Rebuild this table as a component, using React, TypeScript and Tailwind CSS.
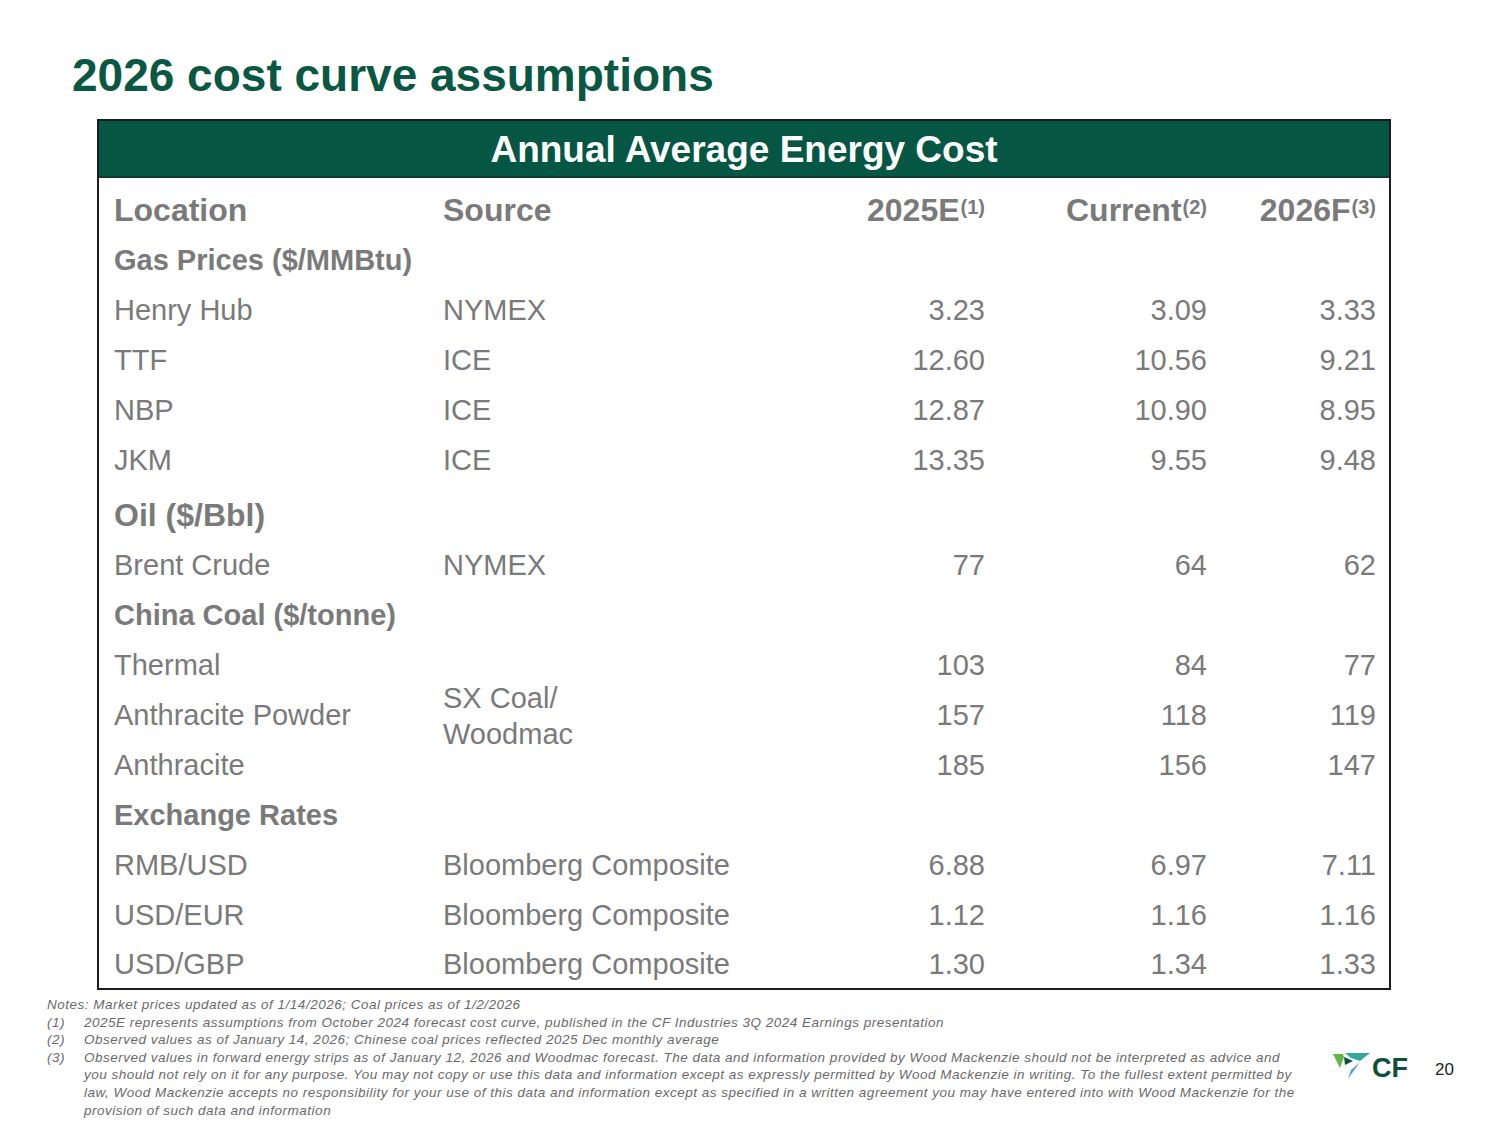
import React from 'react';

type Row =
  | { kind: 'section'; label: string; big?: boolean }
  | { kind: 'data'; label: string; source?: string; values: string[]; last?: boolean };

const rows: Row[] = [
  { kind: 'section', label: 'Gas Prices ($/MMBtu)' },
  { kind: 'data', label: 'Henry Hub', source: 'NYMEX', values: ['3.23', '3.09', '3.33'] },
  { kind: 'data', label: 'TTF', source: 'ICE', values: ['12.60', '10.56', '9.21'] },
  { kind: 'data', label: 'NBP', source: 'ICE', values: ['12.87', '10.90', '8.95'] },
  { kind: 'data', label: 'JKM', source: 'ICE', values: ['13.35', '9.55', '9.48'] },
  { kind: 'section', label: 'Oil ($/Bbl)', big: true },
  { kind: 'data', label: 'Brent Crude', source: 'NYMEX', values: ['77', '64', '62'] },
  { kind: 'section', label: 'China Coal ($/tonne)' },
  { kind: 'data', label: 'Thermal', source: 'coal', values: ['103', '84', '77'] },
  { kind: 'data', label: 'Anthracite Powder', values: ['157', '118', '119'] },
  { kind: 'data', label: 'Anthracite', values: ['185', '156', '147'] },
  { kind: 'section', label: 'Exchange Rates' },
  { kind: 'data', label: 'RMB/USD', source: 'Bloomberg Composite', values: ['6.88', '6.97', '7.11'] },
  { kind: 'data', label: 'USD/EUR', source: 'Bloomberg Composite', values: ['1.12', '1.16', '1.16'] },
  { kind: 'data', label: 'USD/GBP', source: 'Bloomberg Composite', values: ['1.30', '1.34', '1.33'], last: true },
];

const HeadNum = ({ text, note }: { text: string; note: string }) => (
  <div className="flex items-center justify-end">
    <span className="text-[32px] font-bold">{text}</span>
    <span className="text-[20px] font-bold self-start mt-[9px] ml-[1px]">({note})</span>
  </div>
);

// CF Industries mark: inverted triangle split in four pieces
const CfLogo = () => (
  <svg width="37" height="28" viewBox="0 0 37 28">
    <polygon points="0,2 10,2 11,5 7,16" fill="#62b847" />
    <polygon points="12,1 37,1 27,9 18,6" fill="#34a99b" />
    <polygon points="11,5 20,9 12,13" fill="#0d4f3a" />
    <polygon points="15,27 18,18 27,10" fill="#5b9bd5" />
  </svg>
);

export default function App() {
  return (
    <div
      className="w-[1500px] h-[1125px] bg-white overflow-hidden"
      style={{ fontFamily: '"Liberation Sans", Arial, sans-serif' }}
    >
      <h1 className="pl-[72px] pt-[52px] text-[46px] leading-none font-bold text-[#0a5843]">
        2026 cost curve assumptions
      </h1>

      <div className="ml-[97px] mt-[21px] w-[1294px] border-2 border-[#1c1c1c]">
        <div className="h-[57px] bg-[#055643] border-b-2 border-[#0d3b2d] flex items-center justify-center">
          <span className="mt-[3px] text-[37px] font-bold text-white">Annual Average Energy Cost</span>
        </div>

        <div className="grid grid-cols-[344px_342px_200px_222px_169px] pr-[13px] pt-[5px] text-[#7a7a7a]">
          <div className="h-[53px] pl-[15px] flex items-center text-[32px] font-bold">Location</div>
          <div className="h-[53px] flex items-center text-[32px] font-bold">Source</div>
          <HeadNum text="2025E" note="1" />
          <HeadNum text="Current" note="2" />
          <HeadNum text="2026F" note="3" />

          {rows.map((r, i) => {
            if (r.kind === 'section') {
              return (
                <div
                  key={i}
                  className={
                    r.big
                      ? 'col-span-5 h-[55px] pt-[3px] pl-[15px] flex items-center text-[32px] font-bold'
                      : 'col-span-5 h-[50px] pl-[15px] flex items-center text-[29px] font-bold'
                  }
                >
                  {r.label}
                </div>
              );
            }
            const h = r.last ? 'h-[47px]' : 'h-[50px]';
            return (
              <React.Fragment key={i}>
                <div className={`${h} pl-[15px] flex items-center text-[29px]`}>{r.label}</div>
                {r.source === 'coal' ? (
                  <div className="row-span-3 flex items-center text-[29px] leading-[36px]">
                    SX Coal/
                    <br />
                    Woodmac
                  </div>
                ) : r.source ? (
                  <div className={`${h} flex items-center text-[29px]`}>{r.source}</div>
                ) : null}
                {r.values.map((v, j) => (
                  <div key={j} className={`${h} flex items-center justify-end text-[29px]`}>
                    {v}
                  </div>
                ))}
              </React.Fragment>
            );
          })}
        </div>
      </div>

      <div className="flex items-start mt-[6px] pl-[47px]">
        <div className="w-[1262px] text-[13.5px] tracking-[0.5px] leading-[17.6px] italic text-[#6a6a6a] whitespace-nowrap">
          <div>Notes: Market prices updated as of 1/14/2026; Coal prices as of 1/2/2026</div>
          <div className="flex">
            <span className="w-[37px] shrink-0">(1)</span>
            <span>2025E represents assumptions from October 2024 forecast cost curve, published in the CF Industries 3Q 2024 Earnings presentation</span>
          </div>
          <div className="flex">
            <span className="w-[37px] shrink-0">(2)</span>
            <span>Observed values as of January 14, 2026; Chinese coal prices reflected 2025 Dec monthly average</span>
          </div>
          <div className="flex">
            <span className="w-[37px] shrink-0">(3)</span>
            <span>
              Observed values in forward energy strips as of January 12, 2026 and Woodmac forecast. The data and information provided by Wood Mackenzie should not be interpreted as advice and
              <br />
              you should not rely on it for any purpose. You may not copy or use this data and information except as expressly permitted by Wood Mackenzie in writing. To the fullest extent permitted by
              <br />
              law, Wood Mackenzie accepts no responsibility for your use of this data and information except as specified in a written agreement you may have entered into with Wood Mackenzie for the
              <br />
              provision of such data and information
            </span>
          </div>
        </div>
        <div className="flex items-center mt-[54px] ml-[24px]">
          <CfLogo />
          <span className="ml-[2px] mt-[5px] text-[27px] font-bold text-[#0d4f3a] leading-none">CF</span>
          <span className="ml-[27px] mt-[6px] text-[17px] text-[#222] leading-none">20</span>
        </div>
      </div>
    </div>
  );
}
